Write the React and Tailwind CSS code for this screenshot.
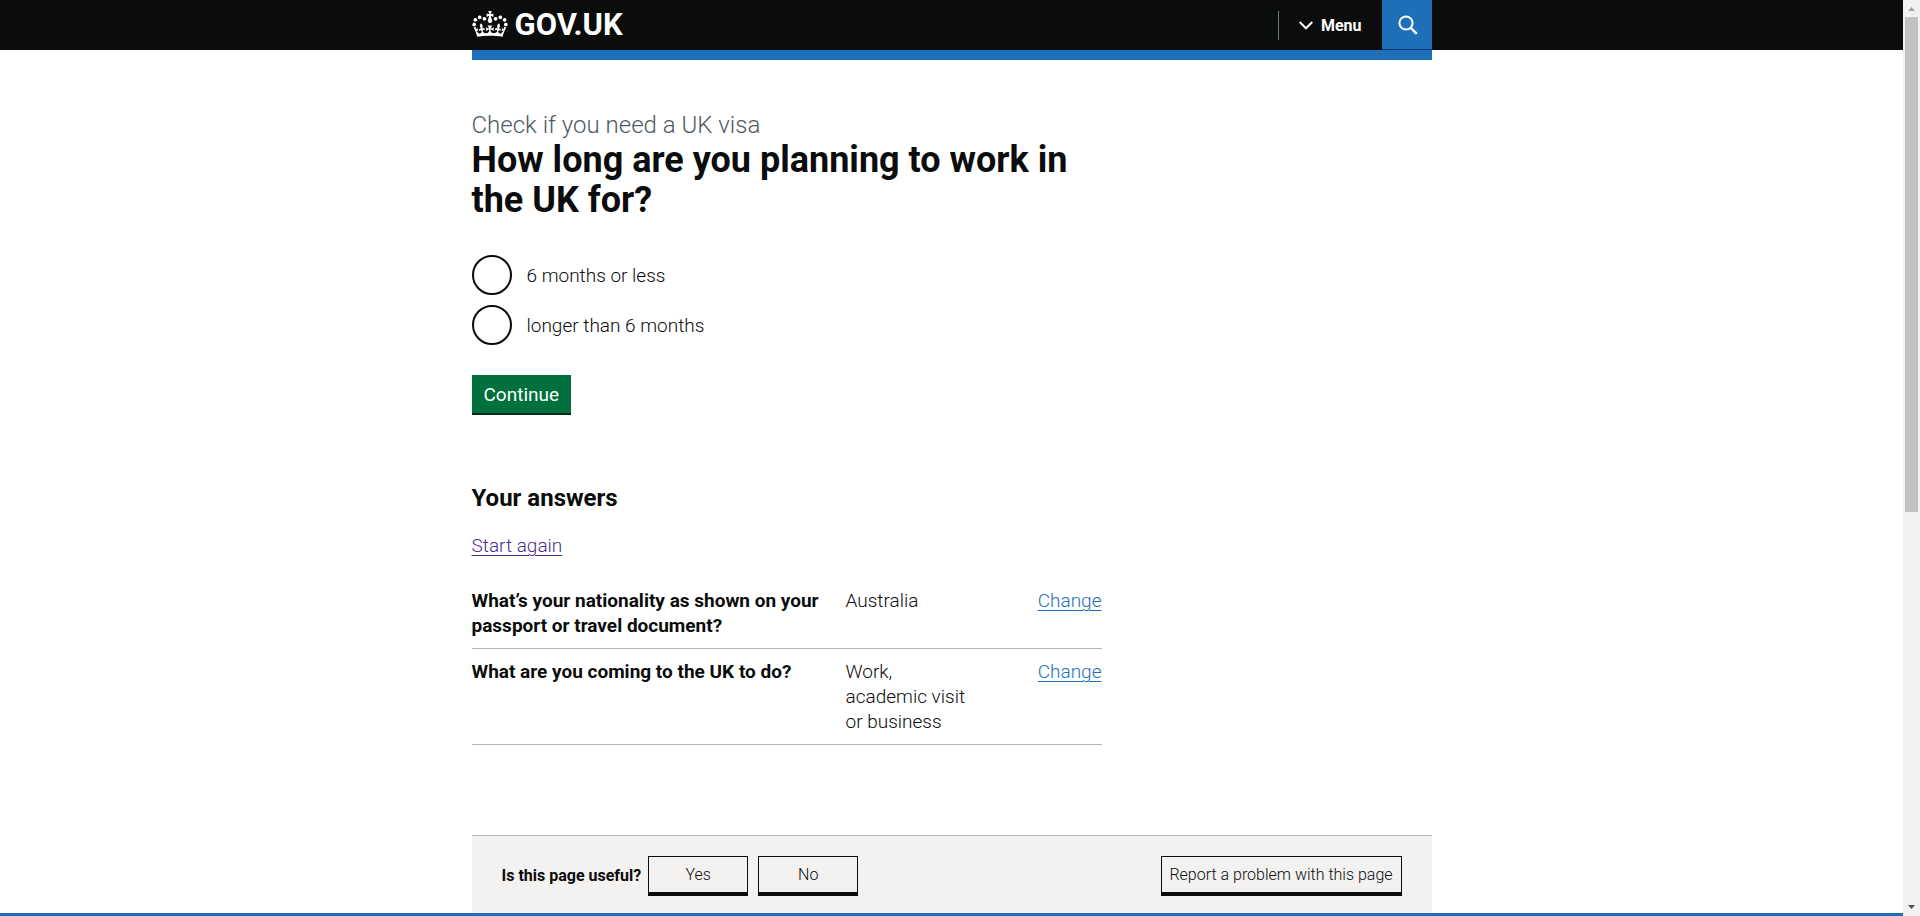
const crownPath =
  "M25 30.2c3.5 1.5 7.7-.2 9.1-3.7 1.5-3.6-.2-7.8-3.9-9.2-3.6-1.4-7.6.3-9.1 3.9-1.4 3.5.3 7.5 3.9 9zM9 39.5c3.6 1.5 7.8-.2 9.2-3.7 1.5-3.6-.2-7.8-3.9-9.1-3.6-1.5-7.6.2-9.1 3.8-1.4 3.5.3 7.5 3.8 9zM4.4 57.2c3.5 1.5 7.7-.2 9.1-3.8 1.5-3.6-.2-7.7-3.9-9.1-3.5-1.5-7.6.3-9.1 3.8-1.4 3.5.3 7.6 3.9 9.1zm38.3-21.4c3.5 1.5 7.7-.2 9.1-3.8 1.5-3.6-.2-7.7-3.9-9.1-3.6-1.5-7.6.3-9.1 3.8-1.3 3.6.4 7.7 3.9 9.1zm64.4-5.6c-3.6 1.5-7.8-.2-9.1-3.7-1.5-3.6.2-7.8 3.8-9.2 3.6-1.4 7.7.3 9.2 3.9 1.3 3.5-.4 7.5-3.9 9zm15.9 9.3c-3.6 1.5-7.7-.2-9.1-3.7-1.5-3.6.2-7.8 3.7-9.1 3.6-1.5 7.7.2 9.2 3.8 1.5 3.5-.3 7.5-3.8 9zm4.7 17.7c-3.6 1.5-7.8-.2-9.2-3.8-1.5-3.6.2-7.7 3.9-9.1 3.6-1.5 7.7.3 9.2 3.8 1.3 3.5-.4 7.6-3.9 9.1zM89.3 35.8c-3.6 1.5-7.8-.2-9.2-3.8-1.4-3.6.2-7.7 3.9-9.1 3.6-1.5 7.7.3 9.2 3.8 1.4 3.6-.3 7.7-3.9 9.1zM69.7 17.7l8.9 4.7V9.3l-8.9 2.8c-.2-.3-.5-.6-.9-.9L72.4 0H59.6l3.5 11.2c-.3.3-.6.5-.9.9l-8.8-2.8v13.1l8.8-4.7c.3.3.6.7.9.9l-5 15.4v.1c-.2.8-.4 1.6-.4 2.4 0 4.1 3.1 7.5 7 8.1h.2c.3 0 .7.1 1 .1.4 0 .7 0 1-.1h.2c4-.6 7.1-4.1 7.1-8.1 0-.8-.1-1.7-.4-2.4V34l-5.1-15.4c.4-.2.7-.6 1-.9zM66 92.8c16.9 0 32.8 1.1 47.1 3.2 4-16.9 8.9-26.7 14-33.5l-9.6-3.4c1 4.9 1.1 7.2 0 10.2-1.5-1.4-3-4.3-4.2-8.7L108.6 76c2.8-2 5-3.2 7.5-3.3-4.4 9.4-10 11.9-13.6 11.2-4.3-.8-6.3-4.6-5.6-7.9 1-4.7 5.7-5.9 8-.5 4.3-8.7-3-11.4-7.6-8.8 7.1-7.2 7.9-13.5 2.1-21.1-8 6.1-8.1 12.3-4.5 20.8-4.7-5.4-12.1-2.5-9.5 6.2 3.4-5.2 7.9-2 7.2 3.1-.6 4.3-6.4 7.8-13.5 7.2-10.3-.9-10.9-8-11.2-13.8 2.5-.5 7.1 1.8 11 7.3L80.2 60c-4.1 4.4-8 5.3-12.3 5.4 1.4-4.4 8-11.6 8-11.6H55.5s6.4 7.2 7.9 11.6c-4.2-.1-8-1-12.3-5.4l1.4 16.4c3.9-5.5 8.5-7.7 10.9-7.3-.3 5.8-.9 12.8-11.1 13.8-7.2.6-12.9-2.9-13.5-7.2-.7-5 3.8-8.3 7.1-3.1 2.7-8.7-4.6-11.6-9.4-6.2 3.7-8.5 3.6-14.7-4.6-20.8-5.8 7.6-5 13.9 2.2 21.1-4.7-2.6-11.9.1-7.7 8.8 2.3-5.5 7.1-4.2 8.1.5.7 3.3-1.3 7.1-5.7 7.9-3.5.7-9-1.8-13.5-11.2 2.5.1 4.7 1.3 7.5 3.3l-4.7-15.4c-1.2 4.4-2.7 7.2-4.3 8.7-1.1-3-.9-5.3 0-10.2l-9.5 3.4c5 6.9 9.9 16.7 14 33.5 14.8-2.1 30.8-3.2 47.7-3.2z";

const answers = [
  {
    question: "What’s your nationality as shown on your passport or travel document?",
    answer: "Australia",
  },
  {
    question: "What are you coming to the UK to do?",
    answer: "Work, academic visit or business",
  },
];

function Header() {
  return (
    <header className="bg-[#0b0c0c] text-white">
      <div className="mx-auto flex h-[50px] max-w-[960px] items-start justify-between">
        <a href="#home" className="flex h-[48px] items-center gap-[7px]">
          <svg viewBox="0 0 132 97" className="h-[26px] w-[36px]" fill="currentColor" aria-hidden="true">
            <path d={crownPath} />
          </svg>
          <span className="pt-[2px] text-[31px] leading-[48px] font-bold">GOV.UK</span>
        </a>
        <div className="flex items-start">
          <button type="button" className="flex h-[50px] items-center text-[16px] font-bold">
            <span className="h-[29px] w-px bg-[#6f777b]" />
            <svg viewBox="0 0 14 9" className="mr-[8px] ml-[20px] h-[9px] w-[14px]" fill="none" stroke="currentColor" strokeWidth="2" aria-hidden="true">
              <path d="M.7 1 7 7.3 13.3 1" />
            </svg>
            <span className="pr-[20px]">Menu</span>
          </button>
          <button type="button" aria-label="Search" className="flex h-[50px] w-[50px] items-center justify-center border-b border-[#003078] bg-[#1d70b8]">
            <svg viewBox="0 0 20 20" className="ml-[3px] h-[20px] w-[20px]" fill="none" stroke="currentColor" aria-hidden="true">
              <circle cx="8" cy="8" r="6.6" strokeWidth="2" />
              <path d="m12.8 12.8 6 6" strokeWidth="2.6" />
            </svg>
          </button>
        </div>
      </div>
    </header>
  );
}

function Radio({ id, label }) {
  return (
    <div className="flex items-center gap-[15px]">
      <input
        type="radio"
        id={id}
        name="length"
        className="h-[40px] w-[40px] appearance-none rounded-full border-2 border-[#0b0c0c] bg-white checked:shadow-[inset_0_0_0_8px_white] checked:bg-[#0b0c0c]"
      />
      <label htmlFor={id}>{label}</label>
    </div>
  );
}

function Question() {
  return (
    <form onSubmit={(e) => e.preventDefault()}>
      <h1 className="text-[36px] leading-[40px] font-bold">
        <span className="block text-[24px] leading-[30px] font-light text-[#505a5f]">Check if you need a UK visa</span>
        How long are you planning to work in the UK for?
      </h1>
      <div className="mt-[35px] flex flex-col gap-[10px]">
        <Radio id="short" label="6 months or less" />
        <Radio id="long" label="longer than 6 months" />
      </div>
      <button
        type="submit"
        className="mt-[30px] block h-[40px] border-b-2 border-[#002d18] bg-[#00703c] px-[12px] font-normal text-white"
      >
        Continue
      </button>
    </form>
  );
}

function Answers() {
  return (
    <section className="mt-[68px]">
      <h2 className="text-[24px] leading-[30px] font-bold">Your answers</h2>
      <p className="mt-[20px]">
        <a href="#start" className="text-[#4c2c92] underline decoration-1 underline-offset-3">Start again</a>
      </p>
      <dl className="mt-[20px]">
        {answers.map((item) => (
          <div key={item.question} className="grid grid-cols-[374px_140px_1fr] border-b border-[#b1b4b6] py-[10px]">
            <dt className="pr-[20px] font-bold">{item.question}</dt>
            <dd className="pr-[15px]">{item.answer}</dd>
            <dd className="text-right">
              <a href="#change" className="text-[#1d70b8] underline decoration-1 underline-offset-3">Change</a>
            </dd>
          </div>
        ))}
      </dl>
    </section>
  );
}

const feedbackButton = "h-[40px] border border-b-4 border-[#0b0c0c] pt-px";

function Feedback() {
  return (
    <section className="mx-auto mt-[90px] flex max-w-[960px] items-start justify-between border-t border-[#b1b4b6] bg-[#f3f2f1] px-[30px] pt-[20px] pb-[17px] text-[16px] leading-[20px]">
      <div className="flex items-center gap-[7px]">
        <h2 className="font-bold">Is this page useful?</h2>
        <div className="flex gap-[10px]">
          <button type="button" className={`${feedbackButton} w-[100px]`}>Yes</button>
          <button type="button" className={`${feedbackButton} w-[100px]`}>No</button>
        </div>
      </div>
      <button type="button" className={`${feedbackButton} w-[241px] whitespace-nowrap`}>Report a problem with this page</button>
    </section>
  );
}

function ScrollBar() {
  return (
    <div className="flex w-[17px] shrink-0 flex-col items-center bg-[#f1f1f1]" aria-hidden="true">
      <svg viewBox="0 0 17 17" className="h-[17px] w-[17px] shrink-0" fill="#a3a3a3">
        <path d="m5 11 3.5-4 3.5 4z" />
      </svg>
      <div className="h-[54%] w-[13px] bg-[#c1c1c1]" />
      <svg viewBox="0 0 17 17" className="mt-auto h-[17px] w-[17px] shrink-0" fill="#505050">
        <path d="m5 6 3.5 4L12 6z" />
      </svg>
    </div>
  );
}

export default function App() {
  return (
    <div className="flex h-screen overflow-hidden bg-white font-['Roboto',sans-serif] text-[19px] leading-[25px] font-light text-[#0b0c0c]">
      <div className="min-w-0 flex-1 overflow-hidden">
        <Header />
        <div className="mx-auto h-[10px] max-w-[960px] bg-[#1d70b8]" />
        <main className="mx-auto max-w-[960px] pt-[50px]">
          <div className="max-w-[630px]">
            <Question />
            <Answers />
          </div>
        </main>
        <Feedback />
        <footer className="h-[10px] bg-[#1d70b8]" />
      </div>
      <ScrollBar />
    </div>
  );
}
